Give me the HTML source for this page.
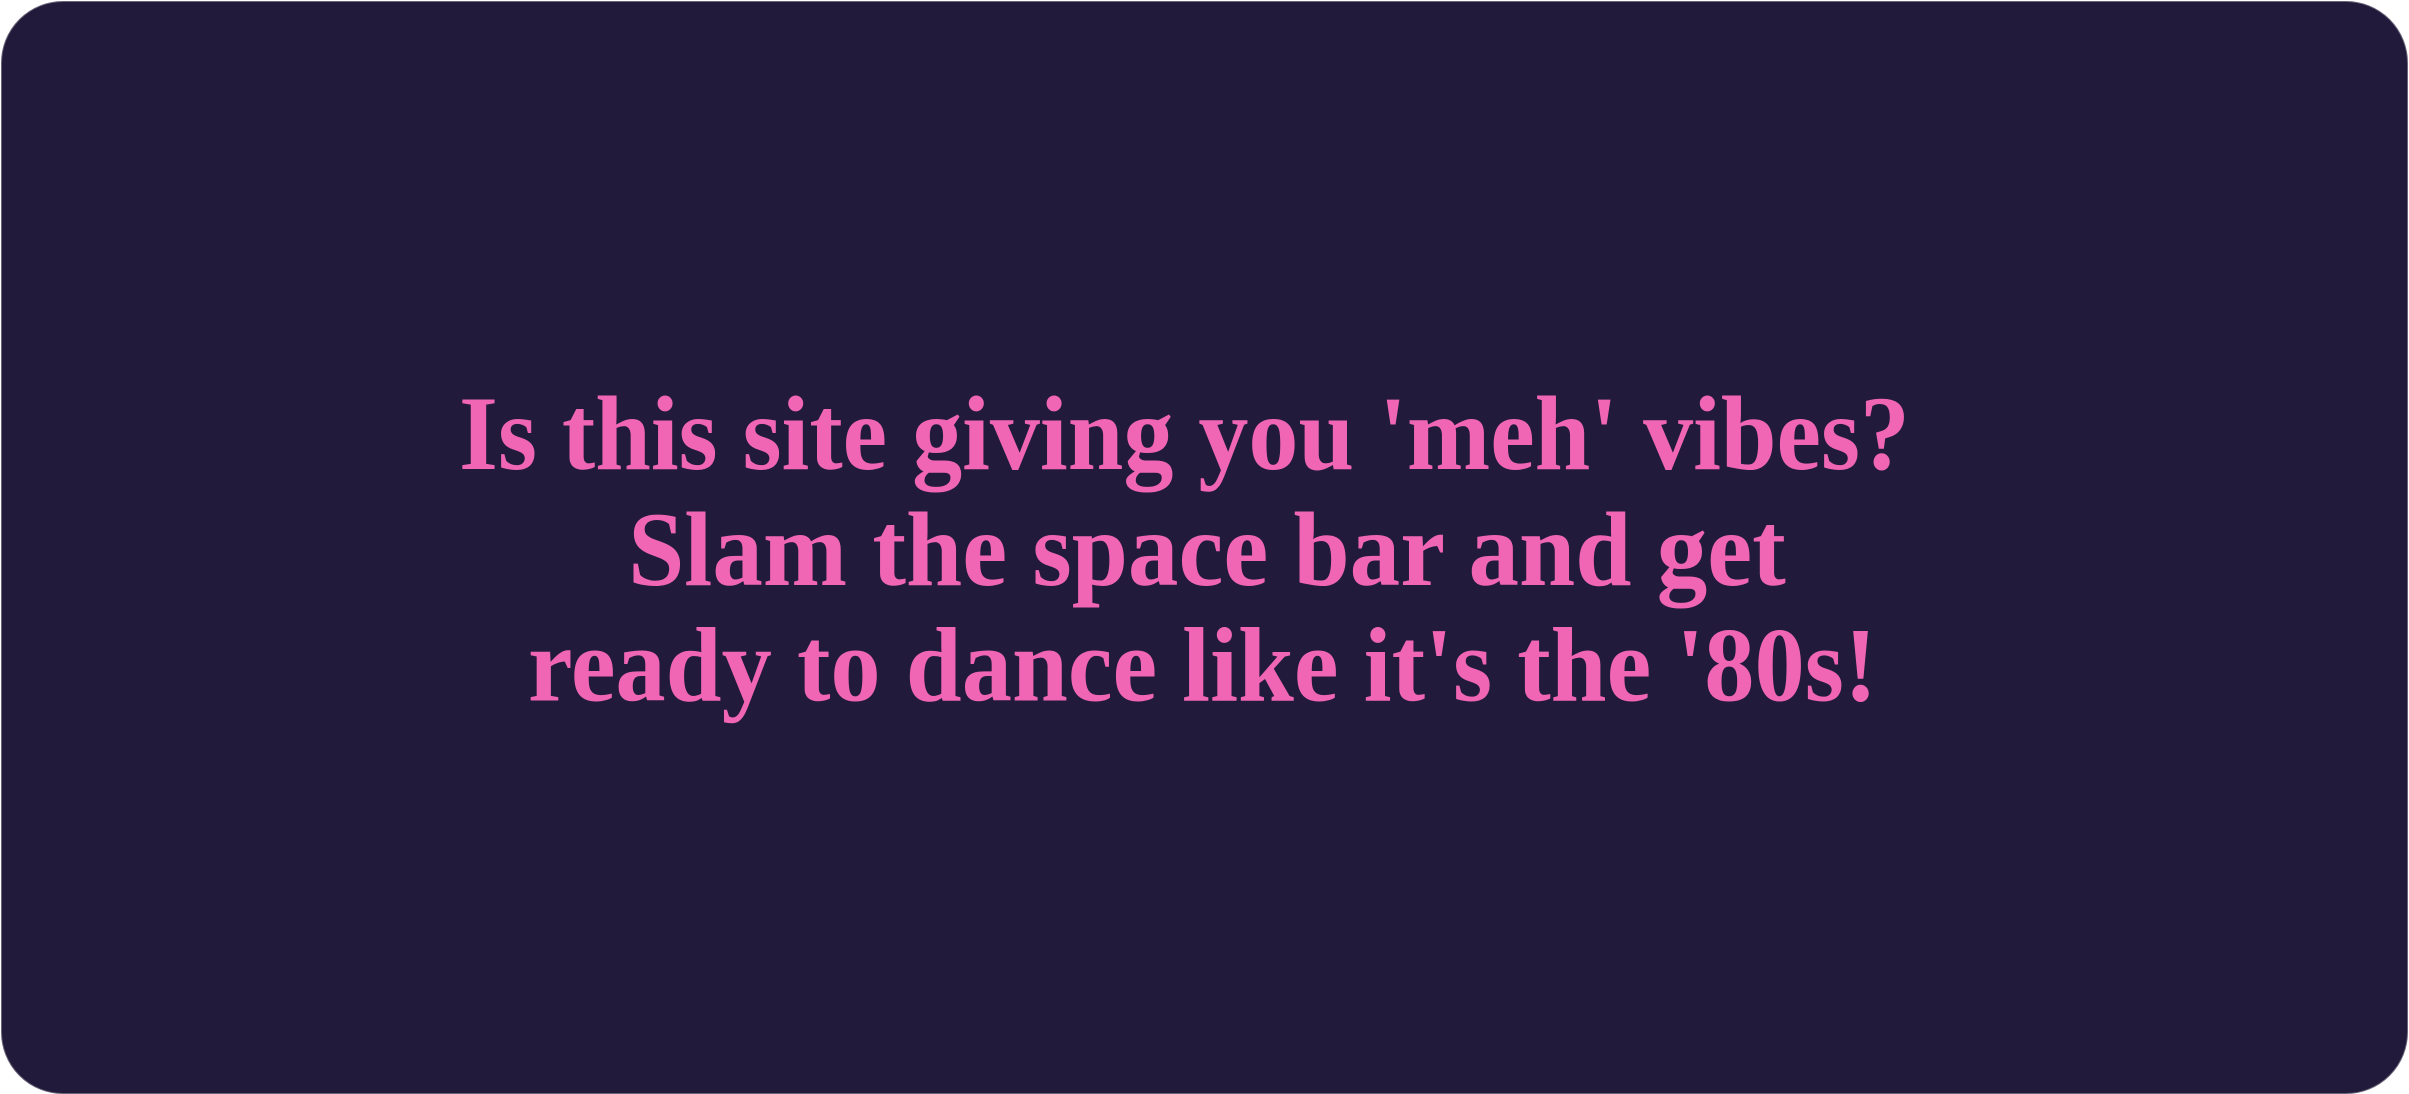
<!DOCTYPE html>
<html><head><style>
html,body{margin:0;padding:0;background:#fff;width:2409px;height:1094px;overflow:hidden}
.card{position:absolute;left:1px;top:1px;width:2405px;height:1091px;background:#221a3b;border-radius:62px;border:1px solid #6a6478}
svg{position:absolute;left:0;top:0}
</style></head><body>
<div class="card"></div>
<svg width="2409" height="1094" viewBox="0 0 2409 1094">
<g transform="scale(1.07,1.02)" font-family="'Liberation Serif',serif" font-weight="bold" font-size="104" fill="#f066b5">
<text x="429" y="460" textLength="1356" lengthAdjust="spacingAndGlyphs">Is this site giving you 'meh' vibes?</text>
<text x="587" y="573.5" textLength="1082" lengthAdjust="spacingAndGlyphs">Slam the space bar and get</text>
<text x="493.5" y="687" textLength="1261" lengthAdjust="spacingAndGlyphs">ready to dance like it's the '80s!</text>
</g>
</svg>
</body></html>
